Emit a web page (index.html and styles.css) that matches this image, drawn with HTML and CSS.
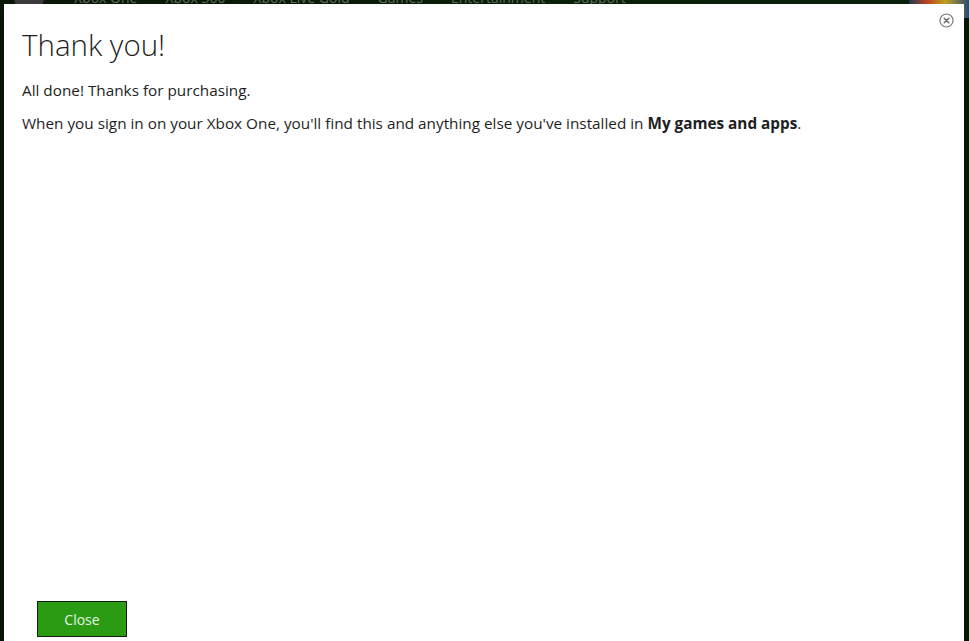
FILE: index.html
```html
<!DOCTYPE html>
<html lang="en">
<head>
<meta charset="utf-8">
<title>Thank you!</title>
<link rel="stylesheet" href="styles.css">
</head>
<body>
<div class="site">
  <nav class="site-nav">
    <span class="avatar"></span>
    <a class="nav-link">Xbox One</a>
    <a class="nav-link">Xbox 360</a>
    <a class="nav-link">Xbox Live Gold</a>
    <a class="nav-link">Games</a>
    <a class="nav-link">Entertainment</a>
    <a class="nav-link">Support</a>
    <span class="promo"></span>
  </nav>
</div>
<div class="modal">
  <button class="modal-x" aria-label="Close">
    <svg width="15" height="15" viewBox="0 0 15 15">
      <circle cx="7.5" cy="7.5" r="6.5" fill="none" stroke="#7a7a7a" stroke-width="1.2"/>
      <path d="M5.2 5.2 L9.8 9.8 M9.8 5.2 L5.2 9.8" stroke="#6a6a6a" stroke-width="1.5" stroke-linecap="round"/>
    </svg>
  </button>
  <div class="modal-body">
    <h1 class="title">Thank you!</h1>
    <p class="text">All done! Thanks for purchasing.</p>
    <p class="text">When you sign in on your Xbox One, you'll find this and anything else you've installed in <b>My games and apps</b>.</p>
  </div>
  <div class="modal-footer">
    <button class="btn-close">Close</button>
  </div>
</div>
</body>
</html>
```

FILE: styles.css
```css
html, body {
  margin: 0;
  padding: 0;
  height: 100%;
  overflow: hidden;
}
body {
  background: #071405;
  font-family: "Open Sans", "Noto Sans", sans-serif;
  position: relative;
}
.site-nav {
  height: 40px;
  margin-top: -22px;
  display: flex;
  align-items: center;
  background: linear-gradient(90deg, #0a1608 0%, #0a2008 60%, #0b1f0c 100%);
}
.avatar {
  width: 30px;
  height: 30px;
  border-radius: 50%;
  background: #3a3a3a;
  margin-left: 14px;
  margin-right: 30px;
  flex: none;
}
.nav-link {
  color: #5c6a5c;
  font-size: 14px;
  line-height: 14px;
  margin-right: 28px;
}
.promo {
  margin-left: auto;
  width: 60px;
  height: 40px;
  background: linear-gradient(90deg, #1c3a52, #c04020 30%, #c0a020 60%, #2a4a70);
}
.modal {
  position: absolute;
  left: 4px;
  top: 4px;
  width: 960px;
  bottom: 0;
  background: #ffffff;
  display: flex;
  flex-direction: column;
}
.modal-x {
  position: absolute;
  right: 10px;
  top: 9px;
  width: 15px;
  height: 15px;
  padding: 0;
  border: 0;
  background: none;
  display: flex;
}
.modal-body {
  padding: 0 18px;
  flex: 1;
}
.title {
  margin: 23px 0 0;
  font-weight: 300;
  font-size: 29.5px;
  line-height: 36px;
  color: #1e1e1e;
}
.text {
  margin: 18px 0 0;
  font-size: 15.3px;
  line-height: 19px;
  color: #1e1e1e;
}
.text + .text {
  margin-top: 14px;
}
.text b {
  font-weight: 700;
}
.modal-footer {
  padding: 0 0 4px 33px;
}
.btn-close {
  width: 90px;
  height: 36px;
  background: #2b9b14;
  border: 1px solid #141a10;
  color: #e6f4e2;
  font-family: "Open Sans", "Noto Sans", sans-serif;
  font-size: 14px;
  padding: 0;
}
```
